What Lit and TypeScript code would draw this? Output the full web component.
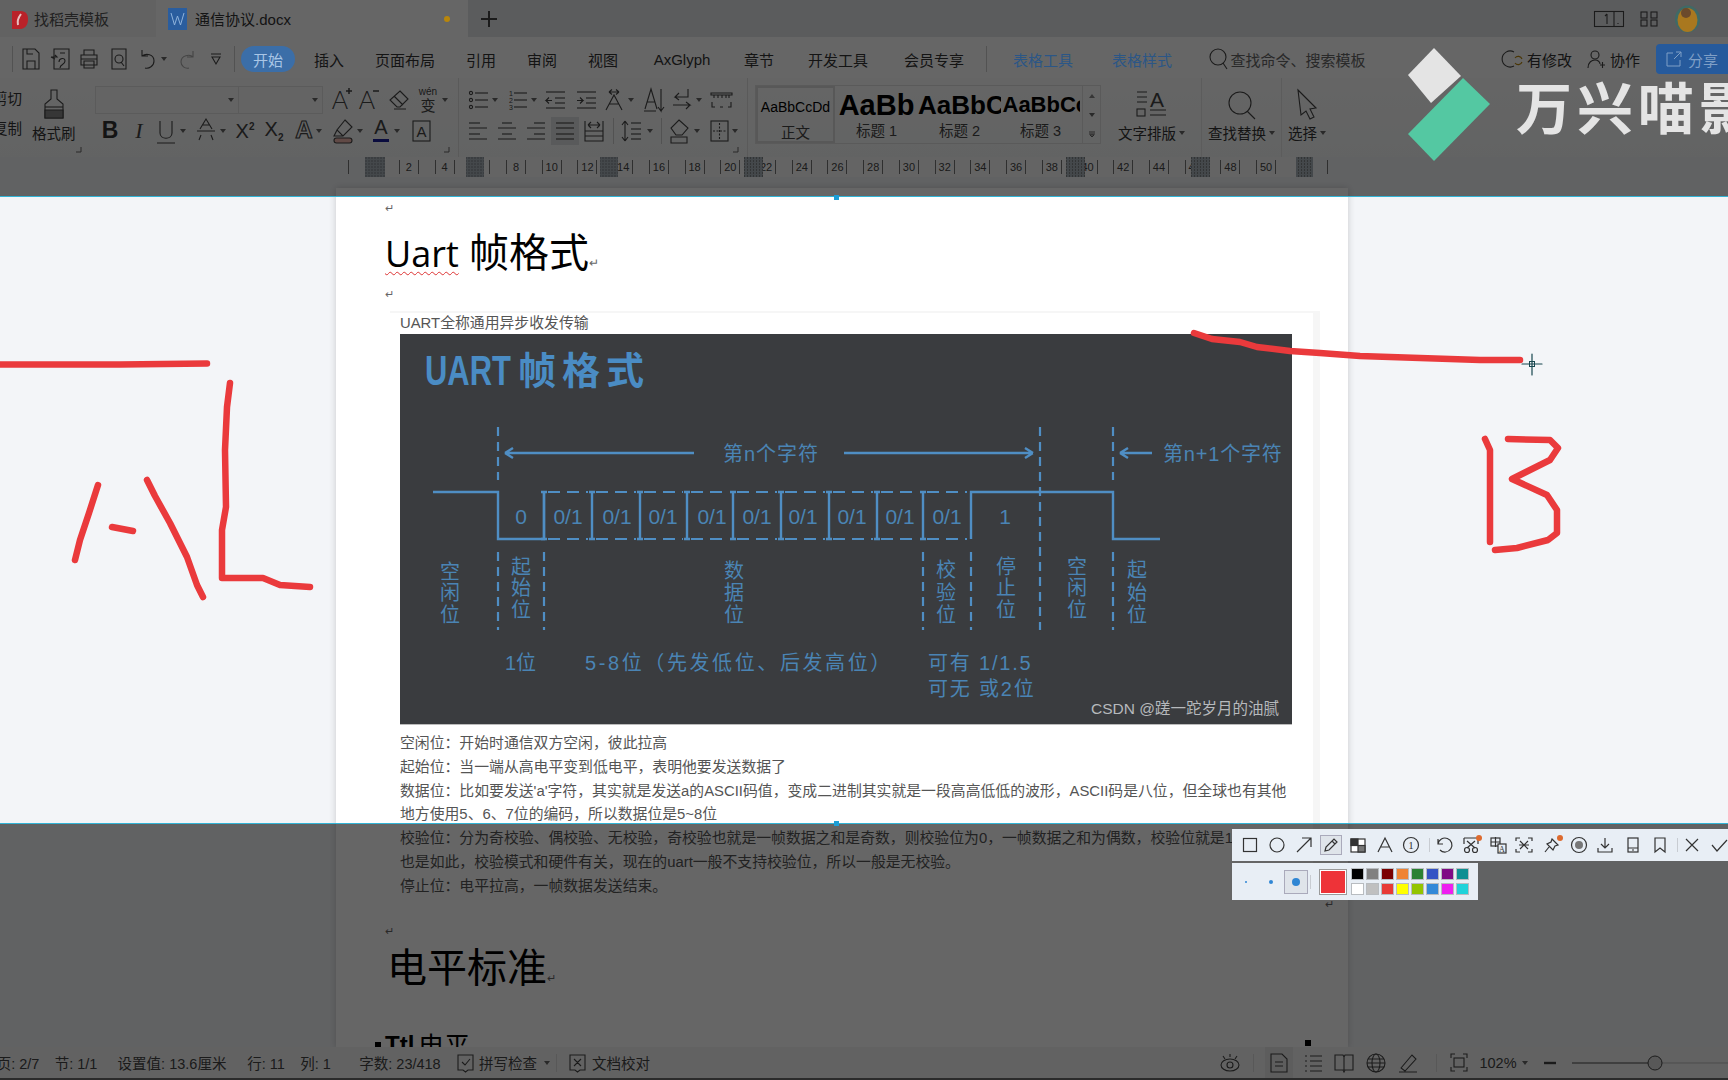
import { LitElement, css, html, svg } from 'lit'

type Item = { at: number; w: number; c: unknown; cls?: string }

// lays items out left to right, margins computed from the x position of each item
const row = (origin: number, items: Item[]) => {
  let x = origin
  return items.map((i) => {
    const m = i.at - x
    x = i.at + i.w
    return html`<span class="it ${i.cls ?? ''}" style="margin-left:${m}px;width:${i.w}px">${i.c}</span>`
  })
}

const ic = (w: number, h: number, c: unknown) =>
  html`<svg class="ic" width=${w} height=${h} viewBox="0 0 ${w} ${h}">${c}</svg>`

const caret = (at: number): Item => ({
  at: at - 3,
  w: 6,
  c: html`<svg width="6" height="4" viewBox="0 0 6 4"><path d="M0 0h6L3 4z" fill="#666" /></svg>`,
})

const glyph = (t: string, size = 20, extra = '') =>
  svg`<text x="50%" y="17" text-anchor="middle" font-size=${size} class="g ${extra}">${t}</text>`

const lines = (ys: number[], x1 = 7, x2 = 20) => ys.map((y) => svg`<path d="M${x1} ${y}H${x2}" />`)

// ---------- ribbon icons ----------
const iSave = ic(20, 24, svg`<path d="M2 2h12l4 4v16H2z M6 22v-8h8v8 M6 2v5h6" />`)
const iSaveAs = ic(21, 24, svg`<path d="M4 2h15v20H4z M1 10h6l-2-2 M1 10l4 2 M9 15c0-4 6-5 6-1s-5 3-5 7 M10 6h5" />`)
const iPrint = ic(20, 24, svg`<path d="M5 8V3h10v5 M2 8h16v10H2z M5 14h10v7H5z M2 12h16" />`)
const iPreview = ic(20, 24, svg`<path d="M3 2h14v20H3z" /><circle cx="10" cy="12" r="4" /><path d="M12 15l3 4" />`)
const iUndo = ic(20, 24, svg`<path d="M4 3v6h6 M4 9c4-3 12-2 12 5 0 5-5 8-9 7" />`)
const iRedo = ic(16, 24, svg`<path class="faint" d="M14 4v6H8 M14 10c-3-3-12-2-12 5 0 4 4 7 8 6" />`)
const iQuick = ic(12, 14, svg`<path d="M1 2h10 M2 5h8L6 12z" />`)

const iBrush = ic(22, 30, svg`<path d="M8 1h6v9l6 5v14H2V15l6-5z" /><path d="M2 18h18" /><path d="M2 21h18v8H2z" fill="#888" />`)
const iGrow = ic(20, 26, svg`<text x="8" y="22" text-anchor="middle" font-size="25" class="g thin">A</text><path d="M14 4h6 M17 1v6" stroke-width="1.5" />`)
const iShrink = ic(20, 26, svg`<text x="8" y="22" text-anchor="middle" font-size="25" class="g thin">A</text><path d="M14 4h6" stroke-width="1.5" />`)
const iErase = ic(22, 24, svg`<path d="M12 3l8 8-8 8H9l-7-7z M6 8l9 9 M6 21h12" />`)
const iWen = ic(20, 28, svg`<text x="10" y="9" text-anchor="middle" font-size="10" class="g">wén</text><text x="10" y="25" text-anchor="middle" font-size="15" class="g">变</text>`)
const iBold = html`<b class="bold">B</b>`
const iItalic = html`<i class="ital">I</i>`
const iUnder = ic(20, 26, svg`<path d="M4 3v12c0 7 12 7 12 0V3 M1 25h18" />`)
const iStrike = ic(20, 26, svg`<path d="M4 11L10 1l6 10 M6 7h8 M1 13h18 M3 22l2-5 M17 22l-2-5" />`)
const iSup = html`<span class="sx">X<sup>2</sup></span>`
const iSub = html`<span class="sx">X<sub>2</sub></span>`
const iOutA = ic(20, 26, svg`<text x="10" y="20" text-anchor="middle" font-size="24" class="oa">A</text>`)
const iHigh = ic(22, 26, svg`<path d="M13 2l7 7-9 9-6-6z M5 12l-3 6h9" /><rect x="2" y="20" width="18" height="5" rx="2.5" fill="#f2b8b0" />`)
const iColorA = ic(16, 28, svg`${glyph('A', 20)}<rect x="0" y="22" width="16" height="3" fill="#1a1f9c" stroke="none" />`)
const iBoxA = ic(19, 24, svg`<rect x="1" y="2" width="17" height="20" /><text x="9.5" y="18" text-anchor="middle" font-size="15" class="g">A</text>`)

const iBullet = ic(20, 24, svg`${lines([5, 12, 19])}<circle cx="3" cy="5" r="1.6" /><circle cx="3" cy="12" r="1.6" /><circle cx="3" cy="19" r="1.6" />`)
const iNum = ic(20, 24, svg`${lines([5, 12, 19])}<text x="2" y="8" font-size="7" class="g">1</text><text x="2" y="15" font-size="7" class="g">2</text><text x="2" y="22" font-size="7" class="g">3</text>`)
const iOut = ic(21, 24, svg`${lines([4, 20], 1, 20)}${lines([10, 15], 10, 20)}<path d="M7 12.5H1l3-3 M1 12.5l3 3" />`)
const iIn = ic(21, 24, svg`${lines([4, 20], 1, 20)}${lines([10, 15], 10, 20)}<path d="M1 12.5h6l-3-3 M7 12.5l-3 3" />`)
const iCross = ic(22, 24, svg`<path d="M3 22L11 7l8 15 M6 16h10 M6 4h10 M6 4l3-2.5 M6 4l3 2.5 M16 4l-3-2.5 M16 4l-3 2.5" />`)
const iSortA = ic(21, 26, svg`<path d="M2 22L8 2l6 20 M4 15h8 M18 2v22l-3-4 M18 24l3-4 M1 24h12" />`)
const iEnter = ic(19, 26, svg`<path d="M16 2v8H3l4-4 M3 10l4 3 M1 18h17l-4-3 M18 18l-4 4" />`)
const iTabs = ic(23, 22, svg`<path d="M1 4h21v2H1z M4 6v3 M8 6v3 M12 6v3 M16 6v3 M19 6v3 M2 13v5h3 M21 13v5h-3 M10 18h3" />`)
const iLeft = ic(20, 22, svg`${lines([3, 14], 1, 12)}<path d="M1 8h18 M1 19h18" />`)
const iCenter = ic(20, 22, svg`${lines([3, 14], 5, 15)}<path d="M1 8h18 M1 19h18" />`)
const iRight = ic(20, 22, svg`${lines([3, 14], 8, 19)}<path d="M1 8h18 M1 19h18" />`)
const iJust = ic(18, 22, svg`${lines([3, 8, 14, 19], 0, 18)}`)
const iDist = ic(20, 24, svg`<path d="M1 2v20h18V2 M1 12h18 M1 17h18 M4 6h12 M4 6l3-3 M4 6l3 3 M16 6l-3-3 M16 6l-3 3" />`)
const iSpacing = ic(21, 24, svg`<path d="M4 2v20 M4 2L1 6 M4 2l3 4 M4 22l-3-4 M4 22l3-4" />${lines([4, 10, 15, 20], 10, 20)}`)
const iShade = ic(22, 26, svg`<path d="M10 2l9 8-6 7H7l-5-7z M2 19h16v6H2z" />`)
const iBorder = ic(19, 24, svg`<rect x="1" y="2" width="17" height="20" /><path d="M9.5 4v16 M3 12h13" stroke-dasharray="2 1.5" />`)

const iLayout = ic(32, 30, svg`<text x="21" y="18" text-anchor="middle" font-size="21" class="g">A</text><path d="M1 3h10 M1 8h10 M1 13h10 M14 21h16 M14 26h16" /><rect x="1" y="20" width="8" height="7" />`)
const iFind = ic(32, 28, svg`<circle cx="14" cy="12" r="11" /><path d="M21 20l8 8" />`)
const iPick = ic(22, 30, svg`<path d="M2 1l18 18-6 1 4 8-4 2-4-8-5 4z" />`)
const launcher = html`<svg class="launch" width="6" height="6" viewBox="0 0 6 6"><path d="M5 0v5H0" fill="none" stroke="#666" /></svg>`

// ---------- capture toolbar icons ----------
const cap = (c: unknown, w = 18) => html`<svg class="cap" width=${w} height="18" viewBox="0 0 18 18">${c}</svg>`
const capTools: Item[] = [
  { at: 1241, w: 18, c: cap(svg`<rect x="2.5" y="2.5" width="13" height="13" />`) },
  { at: 1268, w: 18, c: cap(svg`<circle cx="9" cy="9" r="7" />`) },
  { at: 1295, w: 18, c: cap(svg`<path d="M2 16L16 2 M7 2h9v9" />`) },
  { at: 1320, w: 22, cls: 'capsel', c: cap(svg`<path d="M3 15l1-4 8-8 3 3-8 8z M10 5l3 3" />`) },
  { at: 1349, w: 18, c: cap(svg`<rect x="2" y="3" width="14" height="13" fill="#fff" /><rect x="2" y="3" width="7" height="6.5" fill="#333" /><rect x="9" y="9.5" width="7" height="6.5" fill="#777" />`) },
  { at: 1376, w: 18, c: cap(svg`<path d="M2 16L9 2l7 14 M5 11h8" />`) },
  { at: 1402, w: 18, c: cap(svg`<circle cx="9" cy="9" r="7.5" /><text x="9" y="13" text-anchor="middle" font-size="11" class="g">1</text>`) },
  { at: 1429, w: 1, cls: 'capsep', c: '' },
  { at: 1435, w: 18, c: cap(svg`<path d="M3 3v5h5 M3 8a7 7 0 1 1 2 6" />`) },
  { at: 1462, w: 18, cls: 'dot', c: cap(svg`<path d="M2 2h14v6 M2 2v6 M5 12l8-7 M13 12L5 5" /><circle cx="5" cy="14" r="2.5" /><circle cx="13" cy="14" r="2.5" />`) },
  { at: 1489, w: 18, c: cap(svg`<rect x="2" y="2" width="9" height="8" /><path d="M6.5 1v10 M2 6h9" /><rect x="9" y="8" width="8" height="9" fill="#e8eef5" /><text x="13" y="16" text-anchor="middle" font-size="8" class="g">A</text>`) },
  { at: 1515, w: 18, c: cap(svg`<path d="M1 5V2h4 M13 2h4v3 M1 13v3h4 M13 16h4v-3 M5 5l8 8 M13 5l-8 8 M4 9h10" />`) },
  { at: 1543, w: 18, cls: 'dot', c: cap(svg`<path d="M9 3l6 6-3 1-2 4-6-6 4-2z M6 11l-4 5" />`) },
  { at: 1570, w: 18, c: cap(svg`<circle cx="9" cy="9" r="7.5" /><circle cx="9" cy="9" r="4" fill="#777" stroke="none" />`) },
  { at: 1596, w: 18, c: cap(svg`<path d="M9 2v10 M5 8l4 4 4-4 M2 12v4h14v-4" />`) },
  { at: 1624, w: 18, c: cap(svg`<rect x="4" y="2" width="10" height="14" /><path d="M4 12h10 M8 14h2" />`) },
  { at: 1651, w: 18, c: cap(svg`<path d="M4 2h10v14l-5-4-5 4z" />`) },
  { at: 1677, w: 1, cls: 'capsep', c: '' },
  { at: 1683, w: 18, c: cap(svg`<path d="M3 3l12 12 M15 3L3 15" />`) },
  { at: 1710, w: 18, c: cap(svg`<path d="M2 9l5 6 10-11" />`) },
]
const swatches = [
  '#000000', '#808080', '#7a0000', '#ef8333', '#2b8133', '#3453c4', '#7f0a85', '#0d8f92',
  '#ffffff', '#c0c0c0', '#e83a36', '#ffff00', '#93c400', '#3389d8', '#ee1ff0', '#1fd3da',
]

// ---------- status bar icons ----------
const st = (c: unknown, w = 20) => html`<svg class="ic" width=${w} height="20" viewBox="0 0 ${w} 20">${c}</svg>`
const rulerNumbers = Array.from({ length: 25 }, (_, i) => (i + 1) * 2)
const rulerTabs = [
  [365, 20], [466, 18], [600, 18], [744, 19], [1066, 19], [1191, 19], [1296, 17],
]

// ---------- diagram ----------
const cells = [144, 192, 240, 287, 333, 381, 429, 477, 523, 571]
const cellLabels = [168, 217, 263, 312, 357, 403, 452, 500, 547]
const vertical: [number, number[], string][] = [
  [50, [238, 259, 281], '空闲位'],
  [121, [233, 254, 276], '起始位'],
  [334, [237, 259, 281], '数据位'],
  [546, [236, 259, 281], '校验位'],
  [606, [233, 254, 276], '停止位'],
  [677, [233, 254, 276], '空闲位'],
  [737, [236, 259, 281], '起始位'],
]
const dashes: [number, number, number][] = [
  [98, 93, 146], [98, 218, 296], [144, 218, 296], [523, 218, 296], [571, 218, 296],
  [640, 93, 296], [713, 93, 146], [713, 218, 296],
]

const diagram = svg`
  <text x="25" y="51" font-size="43" font-weight="700" textLength="86" lengthAdjust="spacingAndGlyphs" class="dt">UART</text>
  <text x="118" y="50" font-size="38" font-weight="700" letter-spacing="6" class="dt">帧格式</text>
  ${dashes.map(([x, a, b]) => svg`<path class="dash" d="M${x} ${a}V${b}" />`)}
  <path class="ln" d="M105 119H294 M105 119l8-5 M105 119l8 5 M444 119H633 M633 119l-8-5 M633 119l-8 5 M720 119H752 M720 119l8-5 M720 119l8 5" />
  <text x="323" y="127" font-size="20" letter-spacing="1" class="dl">第n个字符</text>
  <text x="763" y="127" font-size="20" letter-spacing="0.8" class="dl">第n+1个字符</text>
  <path class="ln" d="M33 158H98V205H144V158 M571 205V158H713V205H760" />
  ${cells.slice(0, -1).map((x, i) => svg`<path class="cell" d="M${x + 4} 158H${cells[i + 1] - 4} M${x + 4} 205H${cells[i + 1] - 4}" />
    <path class="ln" d="M${x} 158V205 M${x - 3} 158h6 M${x - 3} 205h6" />`)}
  <text x="121" y="190" text-anchor="middle" font-size="21" class="dl">0</text>
  <text x="605" y="190" text-anchor="middle" font-size="21" class="dl">1</text>
  ${cellLabels.map((x) => svg`<text x=${x} y="190" text-anchor="middle" font-size="21" class="dl">0/1</text>`)}
  ${vertical.map(([x, ys, t]) => ys.map((y, i) => svg`<text x=${x} y=${y + 7} text-anchor="middle" font-size="20" class="dl">${t[i]}</text>`))}
  <text x="105" y="336" font-size="20" class="dl">1位</text>
  <text x="185" y="336" font-size="20" letter-spacing="2.6" class="dl">5-8位（先发低位、后发高位）</text>
  <text x="528" y="336" font-size="20" letter-spacing="1.8" class="dl">可有 1/1.5</text>
  <text x="528" y="362" font-size="20" letter-spacing="1.8" class="dl">可无 或2位</text>
  <text x="691" y="380" font-size="15.5" class="wm">CSDN @蹉一跎岁月的油腻</text>
`

const menu = [
  [314, '插入'], [375, '页面布局'], [466, '引用'], [527, '审阅'], [588, '视图'], [651, 'AxGlyph'],
  [744, '章节'], [808, '开发工具'], [904, '会员专享'],
] as [number, string][]

export class AppRoot extends LitElement {
  static styles = css`
    :host {
      display: block;
      position: relative;
      width: 1728px;
      height: 1080px;
      overflow: hidden;
      font-family: 'Liberation Sans', 'Noto Sans CJK SC', sans-serif;
      color: #333;
      background: #f2f4f7;
    }
    .app {
      display: flex;
      flex-direction: column;
      height: 1080px;
    }
    .it {
      display: inline-flex;
      flex: none;
      align-items: center;
      justify-content: center;
      white-space: nowrap;
    }
    .ic {
      fill: none;
      stroke: #444;
      stroke-width: 1.1;
      overflow: visible;
      flex: none;
    }
    .ic .g {
      fill: #444;
      stroke: none;
      font-family: 'Liberation Sans', 'Noto Sans CJK SC', sans-serif;
    }
    .ic .thin {
      font-family: Lato, 'Liberation Sans', sans-serif;
      font-weight: 300;
    }
    .ic .oa {
      fill: none;
      stroke: #444;
      font-family: 'Liberation Sans', sans-serif;
      font-weight: 700;
    }
    .ic .faint {
      stroke: #aaa;
    }
    .lift {
      position: relative;
      z-index: 6;
    }

    /* Tab-Leiste */
    .tabs {
      display: flex;
      height: 37px;
      flex: none;
      background: #e4e6e8;
      font-size: 15px;
    }
    .tab {
      display: flex;
      align-items: center;
      height: 37px;
      flex: none;
    }
    .tab.first {
      width: 156px;
      background: #f4f4f4;
      color: #555;
    }
    .tab.active {
      width: 312px;
      background: #ffffff;
      color: #333;
    }
    .tabs-right {
      display: flex;
      align-items: center;
    }
    .orange {
      width: 6px;
      height: 6px;
      border-radius: 50%;
      background: #b8860b;
    }

    /* Ribbon */
    .menu {
      display: flex;
      align-items: center;
      height: 41px;
      padding-top: 3px;
      box-sizing: border-box;
      flex: none;
      background: #ffffff;
      font-size: 15px;
    }
    .pill {
      height: 26px;
      border-radius: 13px;
      background: #3b6ea8;
      color: #a9c6e6;
    }
    .blue {
      color: #2b5686;
    }
    .muted {
      color: #666;
    }
    .vsep {
      height: 26px;
      background: #ccc;
    }
    .share {
      height: 30px;
      border-radius: 4px 0 0 4px;
      background: #265a9c;
      color: #7f9fc6;
      gap: 6px;
    }
    .tools {
      display: flex;
      height: 79px;
      flex: none;
      background: linear-gradient(#fdfdfd, #f6f8f8);
      font-size: 14.5px;
    }
    .group {
      position: relative;
      flex: none;
      padding-top: 6px;
      box-sizing: border-box;
      height: 79px;
    }
    .group.sep {
      border-right: 1px solid #e2e2e2;
      box-sizing: border-box;
    }
    .launch {
      position: absolute;
      right: 8px;
      bottom: 4px;
    }
    .line {
      display: flex;
      align-items: center;
      height: 31px;
    }
    .combo {
      display: flex;
      width: 228px;
      height: 28px;
      margin-left: 5px;
      border: 1px solid #e4e4e4;
      box-sizing: border-box;
      background: #fbfbfb;
      flex: none;
    }
    .combo span {
      display: flex;
      align-items: center;
      justify-content: flex-end;
      padding-right: 4px;
      box-sizing: border-box;
    }
    .combo span:first-child {
      width: 143px;
      border-right: 1px solid #e4e4e4;
    }
    .combo span:last-child {
      flex: 1;
    }
    .bold {
      font-size: 23px;
      font-family: 'Liberation Sans', sans-serif;
      color: #333;
    }
    .ital {
      font-size: 22px;
      font-family: 'Liberation Serif', serif;
      color: #444;
    }
    .sx {
      font-size: 20px;
      color: #444;
      line-height: 1;
    }
    .sx sup,
    .sx sub {
      font-size: 10px;
      font-weight: 700;
    }
    .hover {
      height: 28px;
      background: #dfe1e3;
    }
    .stack {
      display: flex;
      flex-direction: column;
      align-items: center;
      flex: none;
      white-space: nowrap;
    }
    .stack .icon {
      height: 36px;
      display: flex;
      align-items: flex-end;
    }
    .stack .label {
      margin-top: 3px;
      display: flex;
      align-items: center;
      gap: 3px;
    }
    .big {
      flex: none;
      height: 79px;
      box-sizing: border-box;
      padding-top: 5px;
      border-right: 1px solid #e6e6e6;
    }
    .clip-texts {
      display: flex;
      flex-direction: column;
      gap: 9px;
      margin-top: 6px;
      width: 22px;
      overflow: hidden;
      flex: none;
      direction: rtl;
      white-space: nowrap;
      line-height: 21px;
    }
    .clipboard {
      display: flex;
      width: 90px;
      padding-top: 5px;
    }
    .clipboard .stack {
      margin-left: 10px;
    }
    .gallery {
      display: flex;
      width: 346px;
      height: 59px;
      margin: 7px 0 0 7px;
      border: 1px solid #e0e0e0;
      box-sizing: border-box;
      flex: none;
    }
    .style {
      display: flex;
      flex-direction: column;
      align-items: center;
      flex: none;
      overflow: hidden;
      color: #444;
      font-size: 14.5px;
      line-height: 20px;
    }
    .style.on {
      width: 79px;
      border: 2px solid #dcdcdc;
      box-sizing: border-box;
    }
    .preview {
      height: 35px;
      line-height: 38px;
      color: #000;
      white-space: nowrap;
    }
    .scroll {
      width: 17px;
      margin-left: auto;
      border-left: 1px solid #e0e0e0;
      display: grid;
      grid-template-rows: 1fr 1fr 1fr;
      place-items: center;
    }

    /* Dokument */
    .doc {
      flex: 1;
      min-height: 0;
      overflow: hidden;
      background: #f3f5f8;
      position: relative;
    }
    .ruler {
      display: flex;
      height: 20px;
      margin-left: 365px;
      width: 948px;
      background: #fbfbfb;
      position: relative;
      font-size: 11px;
      color: #444;
    }
    .ruler .num {
      width: 35.72px;
      flex: none;
      display: flex;
      justify-content: center;
      align-items: center;
      height: 20px;
    }
    .ruler .num span {
      width: 20px;
      text-align: center;
      border-left: 1px solid #777;
      border-right: 1px solid #777;
      box-sizing: border-box;
      height: 14px;
      line-height: 14px;
    }
    .ruler .start {
      width: 26px;
      flex: none;
    }
    .ruler .block {
      position: absolute;
      top: 0;
      height: 20px;
      background: radial-gradient(#555 0.6px, transparent 0.8px) center / 3px 3px #aab4bc;
    }
    .ruler .end {
      position: absolute;
      top: 3px;
      width: 1px;
      height: 14px;
      background: #777;
    }
    .page {
      position: relative;
      width: 1012px;
      height: 860px;
      margin: 11px 0 0 336px;
      padding: 10px 0 0 49px;
      box-sizing: border-box;
      background: #fff;
      box-shadow: 0 0 7px rgba(0, 0, 0, 0.18);
      color: #000;
    }
    .mark {
      font-size: 11px;
      color: #666;
      height: 20px;
      line-height: 20px;
    }
    h1 {
      margin: 5px 0 0;
      font-weight: 400;
      font-size: 40px;
      line-height: 58px;
      font-family: Lato, 'Noto Sans CJK SC', sans-serif;
      white-space: nowrap;
    }
    h1 .u {
      font-size: 36px;
      font-family: 'Open Sans', sans-serif;
      text-decoration: underline wavy #d33 1px;
      text-underline-offset: 4px;
    }
    h1 .m {
      font-size: 12px;
      color: #666;
    }
    .box {
      width: 930px;
      margin: 7px 0 0 5px;
      padding-left: 10px;
      box-sizing: border-box;
      border-top: 2px solid #f6f6f6;
      border-right: 7px solid #f6f6f6;
      height: 578px;
      font-size: 14.85px;
      color: #555;
    }
    .box .t {
      line-height: 23.8px;
      height: 23.8px;
      white-space: nowrap;
    }
    .box .top {
      line-height: 21px;
      height: 21px;
    }
    .shot {
      display: block;
      width: 892px;
      height: 390px;
      background: #3a3c3f;
      border-bottom: 1px solid #bbb;
      margin-bottom: 7px;
    }
    .shot .dt {
      fill: #4a8cc4;
      font-family: 'Liberation Sans', 'Noto Sans CJK SC', sans-serif;
    }
    .shot .dl {
      fill: #4a84b4;
      font-family: 'Liberation Sans', 'Noto Sans CJK SC', sans-serif;
    }
    .shot .wm {
      fill: #b6b9bc;
      font-family: 'Liberation Sans', 'Noto Sans CJK SC', sans-serif;
    }
    .shot .ln {
      fill: none;
      stroke: #4f8ec4;
      stroke-width: 2.4;
    }
    .shot .dash {
      fill: none;
      stroke: #4f8ec4;
      stroke-width: 2.2;
      stroke-dasharray: 9 6;
    }
    .shot .cell {
      fill: none;
      stroke: #4f8ec4;
      stroke-width: 2;
      stroke-dasharray: 12 7;
    }
    .h2 {
      margin: -5px 0 0 2px;
      line-height: 58px;
      font-size: 40px;
      white-space: nowrap;
      font-family: 'Noto Sans CJK SC', sans-serif;
      font-weight: 400;
    }
    .h3 {
      display: flex;
      align-items: center;
      gap: 4px;
      margin: 32px 0 0 -10px;
      font-size: 26px;
      white-space: nowrap;
    }
    .h3 b {
      font-size: 24px;
    }
    .bul {
      width: 6px;
      height: 6px;
      background: #000;
      align-self: flex-start;
      margin-top: 16px;
    }
    .bul.far {
      position: absolute;
      left: 969px;
      top: 852px;
      margin: 0;
    }
    .stray {
      position: absolute;
      left: 989px;
      top: 710px;
      font-size: 11px;
      color: #666;
    }

    /* Statusleiste */
    .status {
      display: flex;
      align-items: center;
      height: 33px;
      flex: none;
      background: #f6f6f6;
      border-bottom: 2px solid #6c6c6c;
      box-sizing: border-box;
      font-size: 14.5px;
      color: #444;
    }
    .stsel {
      height: 31px;
      background: #e8e8e8;
    }
    .stsep {
      height: 18px;
      background: #ddd;
    }

    /* Abdunklung des Bildschirmfotos */
    .dim {
      position: absolute;
      left: 0;
      width: 1728px;
      background: rgba(0, 0, 0, 0.6);
      z-index: 5;
    }
    .dim.a {
      top: 0;
      height: 197px;
      border-bottom: 1px solid #32b4d6;
      box-sizing: border-box;
    }
    .dim.b {
      top: 823px;
      height: 257px;
      border-top: 1px solid #32b4d6;
      box-sizing: border-box;
    }
    .handle {
      position: absolute;
      width: 5px;
      height: 5px;
      background: #1c9ed6;
      z-index: 7;
      left: 834px;
    }
    .logo {
      position: absolute;
      left: 0;
      top: 0;
      z-index: 8;
      width: 1728px;
      height: 180px;
      pointer-events: none;
      overflow: hidden;
    }
    .logo-text {
      position: absolute;
      left: 1516px;
      top: 65px;
      font-size: 56px;
      font-weight: 700;
      letter-spacing: 5px;
      color: #e4e4e4;
      white-space: nowrap;
      font-family: 'Noto Sans CJK SC', sans-serif;
      line-height: 80px;
    }
    .ink {
      position: absolute;
      inset: 0;
      z-index: 9;
      pointer-events: none;
    }
    .ink path {
      fill: none;
      stroke: #ea3a3c;
      stroke-width: 6.5;
      stroke-linecap: round;
      stroke-linejoin: round;
    }
    .ink .cross {
      stroke: #17474f;
      stroke-width: 1.2;
    }
    .ink rect {
      fill: none;
      stroke: #17474f;
    }

    /* Werkzeugleiste der Aufnahme */
    .captool {
      position: absolute;
      left: 0;
      top: 829px;
      z-index: 10;
      display: flex;
      flex-direction: column;
      gap: 2px;
    }
    .cap-a {
      display: flex;
      align-items: center;
      height: 32px;
      margin-left: 1232px;
      width: 496px;
      background: #e8eef5;
      overflow: hidden;
    }
    .cap {
      fill: none;
      stroke: #333;
      stroke-width: 1.2;
      overflow: visible;
    }
    .cap .g {
      fill: #333;
      stroke: none;
      font-family: 'Liberation Serif', serif;
    }
    .capsel {
      height: 20px;
      border: 1px solid #aab;
      background: #dfe4ea;
      box-sizing: border-box;
    }
    .capsep {
      height: 14px;
      background: #c8ccd2;
    }
    .dot {
      position: relative;
    }
    .dot::after {
      content: '';
      position: absolute;
      right: -2px;
      top: -1px;
      width: 6px;
      height: 6px;
      border-radius: 50%;
      background: #dd6a2e;
    }
    .cap-b {
      display: flex;
      align-items: center;
      height: 37px;
      margin-left: 1232px;
      width: 246px;
      background: #e8eef5;
    }
    .pen {
      border-radius: 50%;
      background: #2f86d4;
      flex: none;
    }
    .pensel {
      height: 24px;
      border: 1px solid #aab;
      background: #dfe4ea;
      box-sizing: border-box;
    }
    .cur {
      height: 26px;
      background: #ee3338;
      border: 1px solid #9a9a9a;
      outline: 1px solid #fff;
      outline-offset: -2px;
      box-sizing: border-box;
    }
    .sw {
      display: grid;
      grid-template-columns: repeat(8, 13px);
      grid-auto-rows: 12px;
      gap: 3px 2px;
      margin-left: 4px;
    }
    .sw span {
      border: 1px solid #b8bcc0;
      box-sizing: border-box;
    }
  `

  private dots() {
    return row(1232, [
      { at: 1245, w: 2, c: html`<span class="pen" style="width:2px;height:2px"></span>` },
      { at: 1269, w: 4, c: html`<span class="pen" style="width:4px;height:4px"></span>` },
      { at: 1284, w: 24, cls: 'pensel', c: html`<span class="pen" style="width:8px;height:8px"></span>` },
      { at: 1310, w: 1, cls: 'capsep', c: '' },
      { at: 1319, w: 28, cls: 'cur', c: '' },
    ])
  }

  render() {
    return html`
      <div class="app">
        <div class="tabs">
          <div class="tab first">
            ${row(0, [
              { at: 10, w: 18, cls: 'lift', c: ic(18, 22, svg`<path d="M2 3h8c8 0 8 6 8 9s-2 9-8 9H2z" fill="#b92229" stroke="none" /><path d="M11 6c-3 4-4 7-3 11" stroke="#e8c0c0" stroke-width="2" />`) },
              { at: 34, w: 75, c: '找稻壳模板' },
            ])}
          </div>
          <div class="tab active">
            ${row(0, [
              { at: 12, w: 19, cls: 'lift', c: html`<svg width="19" height="22" viewBox="0 0 19 22"><rect width="19" height="22" fill="#2a5d9e" /><path d="M3 5l3.5 12L9.5 8l3 9L16 5" fill="none" stroke="#8fb3dc" /></svg>` },
              { at: 34, w: 106, cls: 'doctitle', c: '通信协议.docx' },
              { at: 288, w: 6, cls: 'lift', c: html`<span class="orange"></span>` },
            ])}
          </div>
          <div class="tabs-right">
            ${row(468, [
              { at: 481, w: 16, c: ic(16, 16, svg`<path d="M8 0v16 M0 8h16" stroke-width="2" />`) },
              { at: 1594, w: 30, c: ic(30, 16, svg`<rect x="0.5" y="0.5" width="29" height="15" /><path d="M20 1v14 M13 3v10 M11 5l2-2 M24 12v1" />`) },
              { at: 1640, w: 18, c: ic(18, 16, svg`<rect x="1" y="1" width="6" height="6" /><rect x="11" y="1" width="6" height="6" /><rect x="1" y="9" width="6" height="6" /><rect x="11" y="9" width="6" height="6" />`) },
              { at: 1675, w: 25, cls: 'lift', c: html`<svg width="25" height="28" viewBox="0 0 25 28"><ellipse cx="12.5" cy="14" rx="12.5" ry="13.5" fill="#3f6a66" /><ellipse cx="12.5" cy="15" rx="10" ry="12" fill="#a9781f" /><circle cx="11" cy="8" r="5" fill="#6b4a2c" /></svg>` },
            ])}
          </div>
        </div>

        <div class="menu">
          ${row(0, [
            { at: 12, w: 1, cls: 'vsep', c: '' },
            { at: 21, w: 20, c: iSave },
            { at: 50, w: 21, c: iSaveAs },
            { at: 79, w: 20, c: iPrint },
            { at: 109, w: 20, c: iPreview },
            { at: 138, w: 20, c: iUndo },
            caret(164),
            { at: 179, w: 16, c: iRedo },
            { at: 210, w: 12, c: iQuick },
            { at: 234, w: 1, cls: 'vsep', c: '' },
            { at: 241, w: 54, cls: 'pill lift', c: '开始' },
            ...menu.map(([at, t]) => ({ at, w: t === 'AxGlyph' ? 62 : t.length * 15, c: t })),
            { at: 986, w: 1, cls: 'vsep', c: '' },
            { at: 1013, w: 60, cls: 'blue lift', c: '表格工具' },
            { at: 1112, w: 60, cls: 'blue lift', c: '表格样式' },
            { at: 1209, w: 18, c: ic(18, 22, svg`<circle cx="9" cy="9" r="8" /><path d="M14 15l4 6" />`) },
            { at: 1230, w: 136, cls: 'muted', c: '查找命令、搜索模板' },
            { at: 1503, w: 20, c: ic(20, 20, svg`<path d="M11 3a8 8 0 1 0 0 14" /><path d="M12 9a4 4 0 0 1 7 1 M19 13a4 4 0 0 1-7 1" stroke="#b8860b" />`) },
            { at: 1527, w: 45, c: '有修改' },
            { at: 1587, w: 18, c: ic(18, 20, svg`<circle cx="8" cy="6" r="4" /><path d="M1 19c0-6 4-8 7-8s5 2 5 4 M13 16h5 M15.5 13v6" />`) },
            { at: 1610, w: 30, c: '协作' },
            { at: 1656, w: 72, cls: 'share lift', c: html`<svg width="16" height="16" viewBox="0 0 16 16"><path d="M7 2H1v13h13V9 M8 8l7-7 M10 1h5v5" fill="none" stroke="#7f9fc6" /></svg>分享` },
          ])}
        </div>

        <div class="tools">
          <div class="group clipboard">
            <div class="clip-texts"><span>剪切</span><span>复制</span></div>
            <div class="stack">
              <div class="icon">${iBrush}</div>
              <div class="label">格式刷</div>
            </div>
            ${launcher}
          </div>

          <div class="group sep" style="width:369px">
            <div class="line">
              <div class="combo"><span>${caret(0).c}</span><span>${caret(0).c}</span></div>
              ${row(323, [
                { at: 332, w: 20, c: iGrow },
                { at: 359, w: 20, c: iShrink },
                { at: 388, w: 22, c: iErase },
                { at: 418, w: 20, c: iWen },
                caret(445),
              ])}
            </div>
            <div class="line">
              ${row(90, [
                { at: 102, w: 16, c: iBold },
                { at: 134, w: 10, c: iItalic },
                { at: 156, w: 20, c: iUnder },
                caret(183),
                { at: 196, w: 20, c: iStrike },
                caret(223),
                { at: 234, w: 22, c: iSup },
                { at: 263, w: 22, c: iSub },
                { at: 294, w: 20, c: iOutA },
                caret(319),
                { at: 332, w: 22, c: iHigh },
                caret(360),
                { at: 373, w: 16, c: iColorA },
                caret(397),
                { at: 412, w: 19, c: iBoxA },
              ])}
            </div>
            ${launcher}
          </div>

          <div class="group sep" style="width:289px">
            <div class="line">
              ${row(459, [
                { at: 468, w: 20, c: iBullet },
                caret(495),
                { at: 507, w: 20, c: iNum },
                caret(534),
                { at: 545, w: 21, c: iOut },
                { at: 576, w: 21, c: iIn },
                { at: 603, w: 22, c: iCross },
                caret(631),
                { at: 643, w: 21, c: iSortA },
                { at: 672, w: 19, c: iEnter },
                caret(699),
                { at: 710, w: 23, c: iTabs },
              ])}
            </div>
            <div class="line">
              ${row(459, [
                { at: 468, w: 20, c: iLeft },
                { at: 497, w: 20, c: iCenter },
                { at: 526, w: 20, c: iRight },
                { at: 551, w: 28, cls: 'hover', c: iJust },
                { at: 584, w: 20, c: iDist },
                { at: 613, w: 1, cls: 'vsep', c: '' },
                { at: 621, w: 21, c: iSpacing },
                caret(650),
                { at: 661, w: 1, cls: 'vsep', c: '' },
                { at: 669, w: 22, c: iShade },
                caret(697),
                { at: 710, w: 19, c: iBorder },
                caret(735),
              ])}
            </div>
            ${launcher}
          </div>

          <div class="gallery">
            <div class="style on">
              <div class="preview" style="font-size:14px">AaBbCcDd</div>
              <div>正文</div>
            </div>
            <div class="style" style="width:83px">
              <div class="preview" style="font-size:29px;font-weight:700">AaBb</div>
              <div>标题 1</div>
            </div>
            <div class="style" style="width:83px">
              <div class="preview" style="font-size:26px;font-weight:700;width:83px">AaBbC</div>
              <div>标题 2</div>
            </div>
            <div class="style" style="width:79px">
              <div class="preview" style="font-size:22px;font-weight:700;width:76px">AaBbCc</div>
              <div>标题 3</div>
            </div>
            <div class="scroll">
              <svg width="6" height="4" viewBox="0 0 6 4"><path d="M0 4h6L3 0z" fill="#888" /></svg>
              <svg width="6" height="4" viewBox="0 0 6 4"><path d="M0 0h6L3 4z" fill="#666" /></svg>
              <svg width="6" height="6" viewBox="0 0 6 6"><path d="M0 1h6M0 3h6M3 6L1 4h4z" stroke="#666" fill="none" /></svg>
            </div>
          </div>

          <div class="big" style="width:100px;margin-left:1px">
            <div class="stack">
              <div class="icon">${iLayout}</div>
              <div class="label">文字排版${caret(0).c}</div>
            </div>
          </div>
          <div class="big" style="width:80px">
            <div class="stack">
              <div class="icon">${iFind}</div>
              <div class="label">查找替换${caret(0).c}</div>
            </div>
          </div>
          <div class="big" style="width:50px;border:0">
            <div class="stack">
              <div class="icon">${iPick}</div>
              <div class="label">选择${caret(0).c}</div>
            </div>
          </div>
        </div>

        <div class="doc">
          <div class="ruler">
            <div class="start"></div>
            ${rulerNumbers.map((n) => html`<div class="num"><span>${n}</span></div>`)}
            ${rulerTabs.map(([x, w]) => html`<div class="block" style="left:${x - 365}px;width:${w}px"></div>`)}
            <div class="end" style="left:-17px"></div>
            <div class="end" style="left:962px"></div>
          </div>
          <div class="page">
            <div class="mark">↵</div>
            <h1><span class="u">Uart</span> 帧格式<span class="m">↵</span></h1>
            <div class="mark" style="margin-top:-8px">↵</div>
            <div class="box">
              <div class="t top">UART全称通用异步收发传输</div>
              <svg class="shot" width="892" height="390" viewBox="0 0 892 390">${diagram}</svg>
              <div class="t">空闲位：开始时通信双方空闲，彼此拉高</div>
              <div class="t">起始位：当一端从高电平变到低电平，表明他要发送数据了</div>
              <div class="t">数据位：比如要发送'a'字符，其实就是发送a的ASCII码值，变成二进制其实就是一段高高低低的波形，ASCII码是八位，但全球也有其他</div>
              <div class="t">地方使用5、6、7位的编码，所以数据位是5~8位</div>
              <div class="t">校验位：分为奇校验、偶校验、无校验，奇校验也就是一帧数据之和是奇数，则校验位为0，一帧数据之和为偶数，校验位就是1</div>
              <div class="t">也是如此，校验模式和硬件有关，现在的uart一般不支持校验位，所以一般是无校验。</div>
              <div class="t">停止位：电平拉高，一帧数据发送结束。</div>
            </div>
            <div class="mark" style="margin-top:32px">↵</div>
            <div class="h2">电平标准<span class="mark">↵</span></div>
            <div class="h3"><span class="bul"></span><b>Ttl</b> 电平</div>
            <span class="bul far"></span>
            <span class="stray">↵</span>
          </div>
        </div>

        <div class="status">
          ${row(0, [
            { at: -1, w: 38, c: '页: 2/7' },
            { at: 52, w: 48, c: '节: 1/1' },
            { at: 114, w: 116, c: '设置值: 13.6厘米' },
            { at: 245, w: 42, c: '行: 11' },
            { at: 299, w: 33, c: '列: 1' },
            { at: 355, w: 90, c: '字数: 23/418' },
            { at: 457, w: 17, c: st(svg`<path d="M1 2h15v15h-5l-2.5 2L6 17H1z M5 9l3 3 5-6" />`, 17) },
            { at: 478, w: 60, c: '拼写检查' },
            caret(547),
            { at: 556, w: 1, cls: 'stsep', c: '' },
            { at: 569, w: 17, c: st(svg`<path d="M1 2h15v15h-5l-2.5 2L6 17H1z M5 6l7 7 M12 6l-7 7" />`, 17) },
            { at: 591, w: 60, c: '文档校对' },
            { at: 1220, w: 20, c: st(svg`<ellipse cx="10" cy="12" rx="9" ry="6" /><circle cx="10" cy="12" r="3" /><path d="M10 1v3 M3 3l2 3 M17 3l-2 3" />`) },
            { at: 1253, w: 1, cls: 'stsep', c: '' },
            { at: 1265, w: 28, cls: 'stsel', c: st(svg`<path d="M2 1h11l5 5v13H2z M6 9h8 M6 13h8" />`) },
            { at: 1304, w: 18, c: st(svg`<path d="M1 3h2 M6 3h12 M1 8h2 M6 8h12 M1 13h2 M6 13h12 M1 18h2 M6 18h12" />`, 18) },
            { at: 1334, w: 20, c: st(svg`<path d="M1 2h8l1 2 1-2h8v15h-8l-1 2-1-2H1z M10 4v13" />`) },
            { at: 1366, w: 20, c: st(svg`<circle cx="10" cy="10" r="9" /><ellipse cx="10" cy="10" rx="4" ry="9" /><path d="M1 10h18 M2 6h16 M2 14h16" />`) },
            { at: 1398, w: 20, c: st(svg`<path d="M3 15L14 2l4 4L7 18z M1 19h18" />`) },
            { at: 1436, w: 1, cls: 'stsep', c: '' },
            { at: 1450, w: 18, c: st(svg`<path d="M1 5V1h4 M13 1h4v4 M1 14v4h4 M13 18h4v-4" /><rect x="4" y="5" width="10" height="9" />`, 18) },
            { at: 1478, w: 40, c: '102%' },
            caret(1525),
            { at: 1544, w: 12, c: st(svg`<path d="M0 10h12" stroke-width="2.4" />`, 12) },
            { at: 1572, w: 156, c: html`<svg width="156" height="16" viewBox="0 0 156 16"><path d="M0 8H76" stroke="#444" /><path d="M90 8H156" stroke="#bbb" /><circle cx="83" cy="8" r="7" fill="#ddd" stroke="#444" /></svg>` },
          ])}
        </div>
      </div>

      <div class="dim a"></div>
      <div class="dim b"></div>
      <div class="handle" style="top:195px"></div>
      <div class="handle" style="top:821px"></div>

      <div class="logo">
        <svg width="1728" height="180" viewBox="0 0 1728 180">
          <path d="M1434 48L1461 76L1431 103L1408 75Z" fill="#e4e4e4" />
          <path d="M1463 78L1490 104L1434 161L1408 134Z" fill="#54c8a2" />
        </svg>
        <div class="logo-text">万兴喵影</div>
      </div>

      <svg class="ink" width="1728" height="1080" viewBox="0 0 1728 1080">
        <path d="M0 364.500L120 364.500L207 363.500" />
        <path d="M230 383L227 407L225 450L226 507L222 530L222 578L263 578L280 585L310 587" />
        <path d="M98 485L89 513L80 540L75 560" />
        <path d="M147 480L155 496L170 523L187 557L197 585L203 597" />
        <path d="M112 527L133 531" />
        <path d="M1194 333L1212 339L1240 342L1257 347L1290 351L1320 353L1360 356L1420 358L1480 360L1520 360" />
        <path d="M1485 439L1490 450L1490 542" />
        <path d="M1508 439L1550 440L1558 448L1550 460L1512 479L1547 495L1557 510L1557 533L1548 540L1517 548L1495 550" />
        <path class="cross" d="M1532 354V375 M1522 364H1542" />
        <rect x="1529.500" y="361.500" width="5" height="5" />
      </svg>

      <div class="captool">
        <div class="cap-a">${row(1232, capTools)}</div>
        <div class="cap-b">
          ${this.dots()}
          <div class="sw">${swatches.map((c) => html`<span style="background:${c}"></span>`)}</div>
        </div>
      </div>
    `
  }
}

customElements.define('app-root', AppRoot)
